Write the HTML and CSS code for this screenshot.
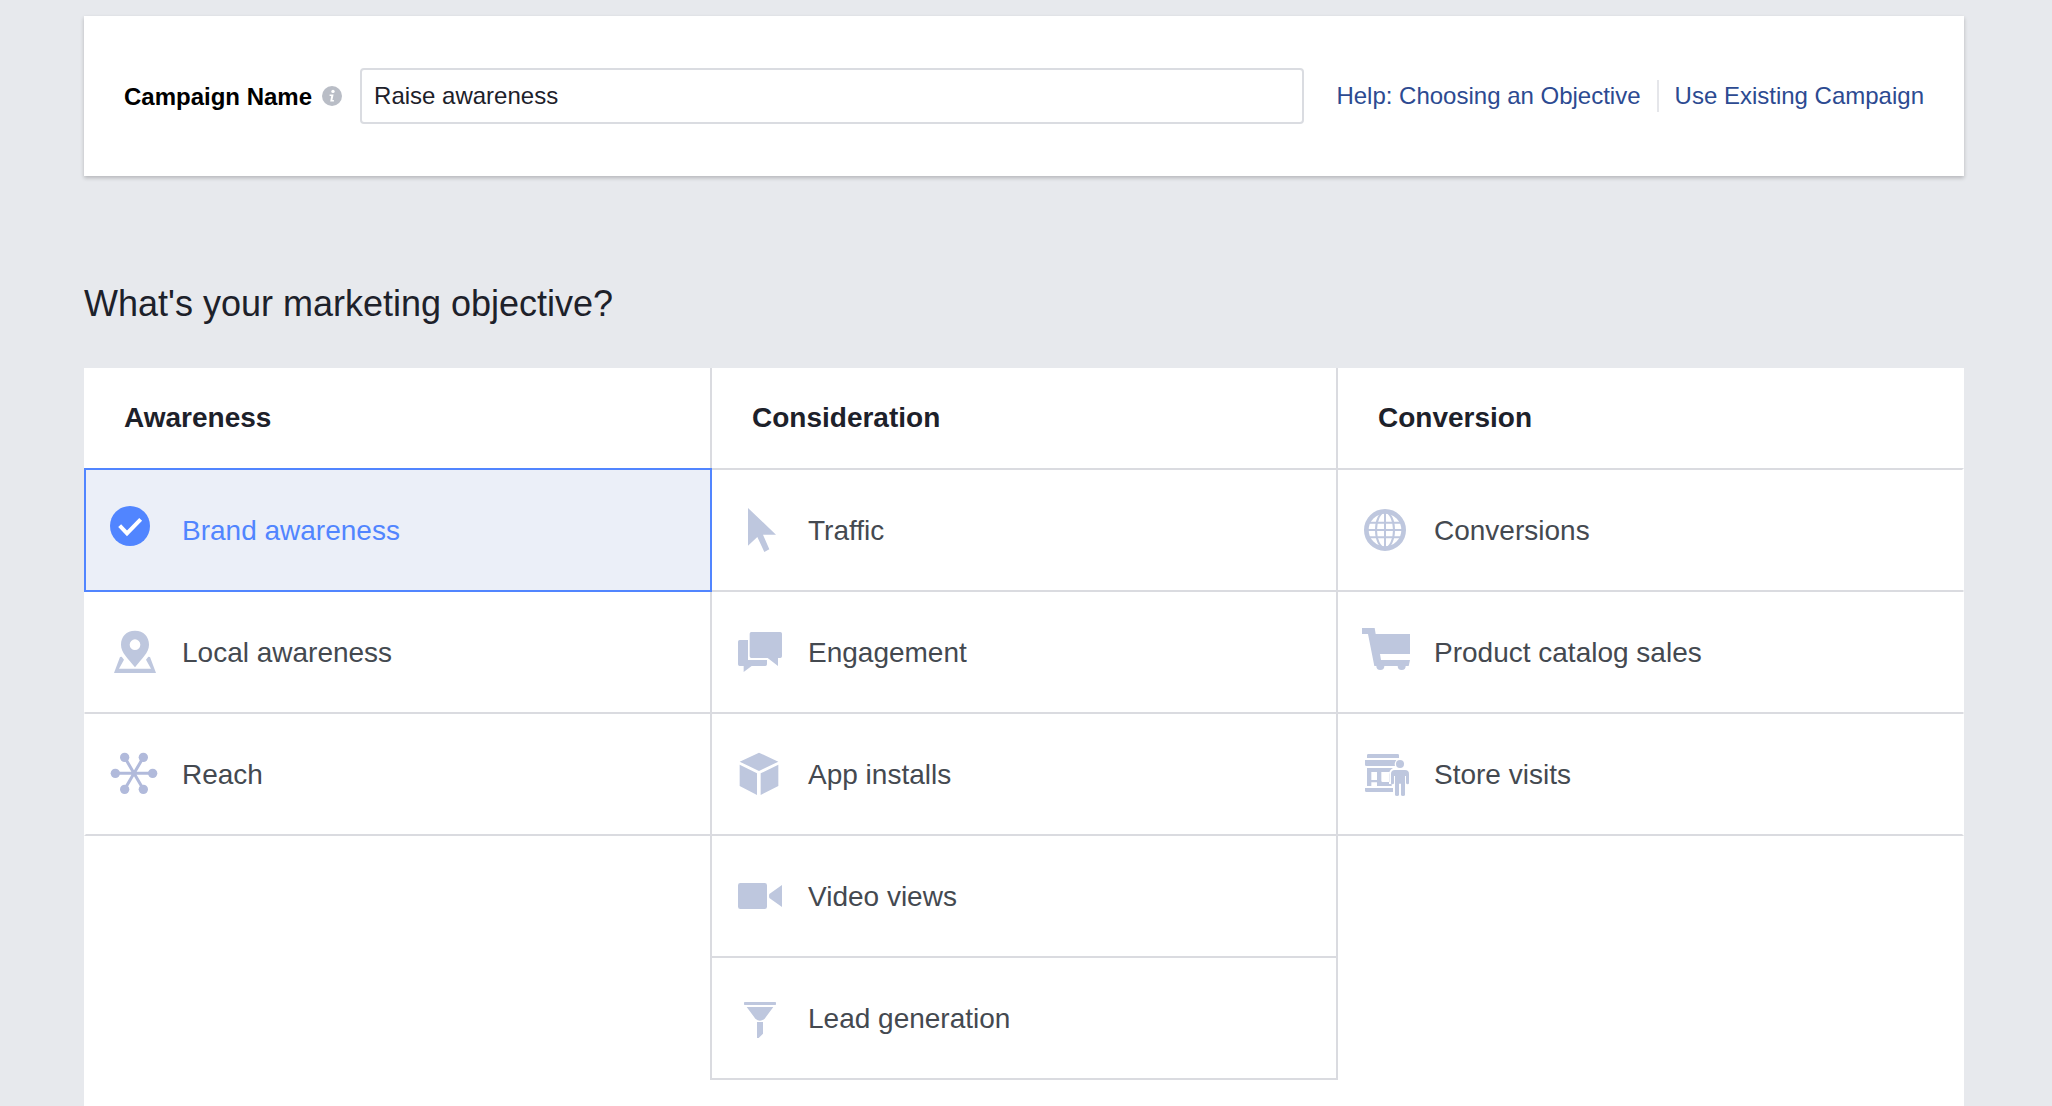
FILE: index.html
```html
<!DOCTYPE html>
<html lang="en">
<head>
<meta charset="utf-8">
<meta name="viewport" content="width=device-width, initial-scale=1">
<title>Create Campaign</title>
<link rel="stylesheet" href="styles.css">
</head>
<body>
<main class="page">
  <section class="campaign">
    <div class="campaign-label">
      <label for="campaign-name">Campaign Name</label>
      <svg class="info" viewBox="0 0 20 20" aria-hidden="true">
        <circle cx="10" cy="10" r="10" fill="#b9bdc6"/>
        <circle cx="11" cy="5.4" r="1.7" fill="#fff"/>
        <path d="M7.6 8.4h4L10.4 14h1.5v1.6H8.2L9.2 10H7.6z" fill="#fff"/>
      </svg>
    </div>
    <input class="campaign-input" id="campaign-name" type="text" value="Raise awareness">
    <nav class="campaign-links">
      <a href="#">Help: Choosing an Objective</a>
      <a href="#">Use Existing Campaign</a>
    </nav>
  </section>

  <h1 class="title">What's your marketing objective?</h1>

  <form class="objectives">
    <section class="column">
      <h2 class="column-title">Awareness</h2>
      <label class="objective">
        <input type="radio" name="objective" checked>
        <svg class="icon" viewBox="0 0 144 144" aria-hidden="true">
          <circle cx="60" cy="60" r="60" fill="#5185ff"/>
          <path d="M29 59l22 23 41-42" fill="none" stroke="#fff" stroke-width="12"/>
        </svg>
        <span>Brand awareness</span>
      </label>
      <label class="objective">
        <input type="radio" name="objective">
        <svg class="icon" viewBox="0 0 144 144" aria-hidden="true">
          <path fill-rule="evenodd" d="M75 8C49 8 33 26 33 50c0 24 22 42 42 68 20-26 42-44 42-68C117 26 101 8 75 8zm0 26a16 16 0 1 1 0 32 16 16 0 0 1 0-32z"/>
          <path d="M12 135l18-48 5-1 7 9-15 27h96l-15-27 7-9 5 1 18 48z"/>
        </svg>
        <span>Local awareness</span>
      </label>
      <label class="objective">
        <input type="radio" name="objective">
        <svg class="icon icon-reach" viewBox="0 0 144 144" aria-hidden="true">
          <path d="M16 70h112M44 22l56 96M100 22l-56 96" stroke-width="9"/>
          <circle cx="16" cy="70" r="14"/><circle cx="128" cy="70" r="14"/>
          <circle cx="44" cy="22" r="14"/><circle cx="100" cy="22" r="14"/>
          <circle cx="44" cy="118" r="14"/><circle cx="100" cy="118" r="14"/>
        </svg>
        <span>Reach</span>
      </label>
    </section>

    <section class="column">
      <h2 class="column-title">Consideration</h2>
      <label class="objective">
        <input type="radio" name="objective">
        <svg class="icon" viewBox="0 0 144 144" aria-hidden="true">
          <path d="M36 6l84 80H81l19 44-15 8-21-45-28 26z"/>
        </svg>
        <span>Traffic</span>
      </label>
      <label class="objective">
        <input type="radio" name="objective">
        <svg class="icon" viewBox="0 0 144 144" aria-hidden="true">
          <path d="M46 12h87q5 0 5 5v68q0 5-5 5h-7v24L95 90H46q-5 0-5-5V17q0-5 5-5z"/>
          <path d="M11 36h25v60h57v13q0 5-5 5H47l-24 18v-18H11q-5 0-5-5V41q0-5 5-5z"/>
        </svg>
        <span>Engagement</span>
      </label>
      <label class="objective">
        <input type="radio" name="objective">
        <svg class="icon" viewBox="0 0 144 144" aria-hidden="true">
          <path d="M69 8l58 27-58 28-58-28zM11 44l52 26v65l-52-27zM127 44L74 70v65l53-27z"/>
        </svg>
        <span>App installs</span>
      </label>
      <label class="objective">
        <input type="radio" name="objective">
        <svg class="icon" viewBox="0 0 144 144" aria-hidden="true">
          <rect x="6" y="33" width="87" height="78" rx="7"/>
          <path d="M138 39v66l-38-27q-2-5 0-12z"/>
        </svg>
        <span>Video views</span>
      </label>
      <label class="objective">
        <input type="radio" name="objective">
        <svg class="icon" viewBox="0 0 144 144" aria-hidden="true">
          <rect x="24" y="24" width="96" height="9" rx="2"/>
          <path d="M32 39h80L86 74q-14 12-28 0zM63 84h18v35l-13 13h-5z"/>
        </svg>
        <span>Lead generation</span>
      </label>
    </section>

    <section class="column">
      <h2 class="column-title">Conversion</h2>
      <label class="objective">
        <input type="radio" name="objective">
        <svg class="icon icon-globe" viewBox="0 0 144 144" aria-hidden="true">
          <circle cx="69" cy="72" r="56" stroke-width="14"/>
          <path d="M69 20v104M17 72h104M20 50h98M20 94h98" stroke-width="6"/>
          <ellipse cx="69" cy="72" rx="27" ry="54" stroke-width="6"/>
        </svg>
        <span>Conversions</span>
      </label>
      <label class="objective">
        <input type="radio" name="objective">
        <svg class="icon" viewBox="0 0 144 144" aria-hidden="true">
          <path d="M0 0h38l3 18h103v60H54l3 18h87l-4 18H37L18 18H0z"/>
          <circle cx="55" cy="114" r="12"/><circle cx="119" cy="114" r="12"/>
        </svg>
        <span>Product catalog sales</span>
      </label>
      <label class="objective">
        <input type="radio" name="objective">
        <svg class="icon" viewBox="0 0 144 144" aria-hidden="true">
          <path d="M19 12h88q4 0 4 4v8H15v-8q0-4 4-4zM9 30h94q-7 8-4 18H13q-4 0-4-4zM9 114h84v12H13q-4 0-4-4z"/>
          <path fill-rule="evenodd" d="M15 54h78q-12 7-12 20v28h8v6H45V97H28v11H15zM28 66v24h17V66zM58 66v26q0 4 4 4h20V66z"/>
          <circle cx="114" cy="42" r="12"/>
          <path d="M99 60h30q12 0 12 12v27q0 4-4 4t-5-4V78h-3v56q0 4-6 4t-6-4v-33h-6v33q0 4-6 4t-6-4V78h-3v21q0 4-5 4t-4-4V72q0-12 12-12z"/>
        </svg>
        <span>Store visits</span>
      </label>
    </section>
  </form>
</main>
</body>
</html>
```
FILE: styles.css
```css
* { box-sizing: border-box; }

body {
  margin: 0;
  background: #e7e9ed;
  color: #1d212a;
  font-family: "Liberation Sans", Arial, Helvetica, sans-serif;
  font-size: 24px;
  line-height: 32px;
}

.page {
  display: flex;
  flex-direction: column;
  min-height: 100vh;
  padding: 16px 88px 0 84px;
}

/* Campaign name bar */
.campaign {
  display: flex;
  align-items: center;
  padding: 52px 40px;
  background: #fff;
  box-shadow: 0 2px 4px rgba(0, 0, 0, .22);
}

.campaign-label {
  display: flex;
  align-items: center;
  gap: 10px;
  margin-right: 18px;
  color: #000;
  font-weight: bold;
}

.campaign-label label,
.objective span { padding-top: 2px; }

.info {
  width: 20px;
  height: 20px;
}

.campaign-input {
  flex: 1;
  min-width: 0;
  height: 56px;
  padding: 0 12px;
  border: 2px solid #dadce1;
  border-radius: 4px;
  background: #fff;
  color: #1d212a;
  font: inherit;
}

.campaign-links {
  display: flex;
  margin-left: 32px;
}

.campaign-links a {
  color: #2c4a91;
  text-decoration: none;
}

.campaign-links a + a {
  margin-left: 16px;
  padding-left: 16px;
  border-left: 2px solid #e5e6ea;
}

/* Objective picker */
.title {
  margin: 108px 0 44px;
  font-size: 36px;
  font-weight: normal;
  line-height: 40px;
}

.objectives {
  display: flex;
  flex: 1;
  background: #fff;
}

.column {
  flex: 1;
  min-width: 0;
}

.column + .column { margin-left: -2px; }

.column-title {
  margin: 0;
  padding: 34px 40px 34px 38px;
  border: solid transparent;
  border-width: 0 2px;
  font-size: 28px;
  line-height: 32px;
}

.column + .column .column-title { padding-left: 40px; }
.column:nth-child(2) .column-title { border-color: #dadbe0; }

.objective {
  position: relative;
  display: flex;
  align-items: center;
  gap: 24px;
  height: 124px;
  padding: 0 24px;
  border: 2px solid #dadbe0;
  color: #444950;
  font-size: 28px;
  cursor: pointer;
}

.objective + .objective { margin-top: -2px; }

.column:first-child .objective,
.column:last-child .objective {
  border-left-color: transparent;
  border-right-color: transparent;
}

.column .objective:has(:checked) {
  z-index: 1;
  border-color: #5185ff;
  background: #ebeff8;
  color: #5185ff;
}

.objective input {
  position: absolute;
  inset: 0;
  margin: 0;
  appearance: none;
  cursor: pointer;
}

.icon {
  flex: none;
  width: 48px;
  height: 48px;
  fill: #bec7de;
}

.icon-reach {
  fill: #b1badb;
  stroke: #b1badb;
}

.icon-reach circle { stroke: none; }

.icon-globe {
  fill: none;
  stroke: #bec7de;
}
```
